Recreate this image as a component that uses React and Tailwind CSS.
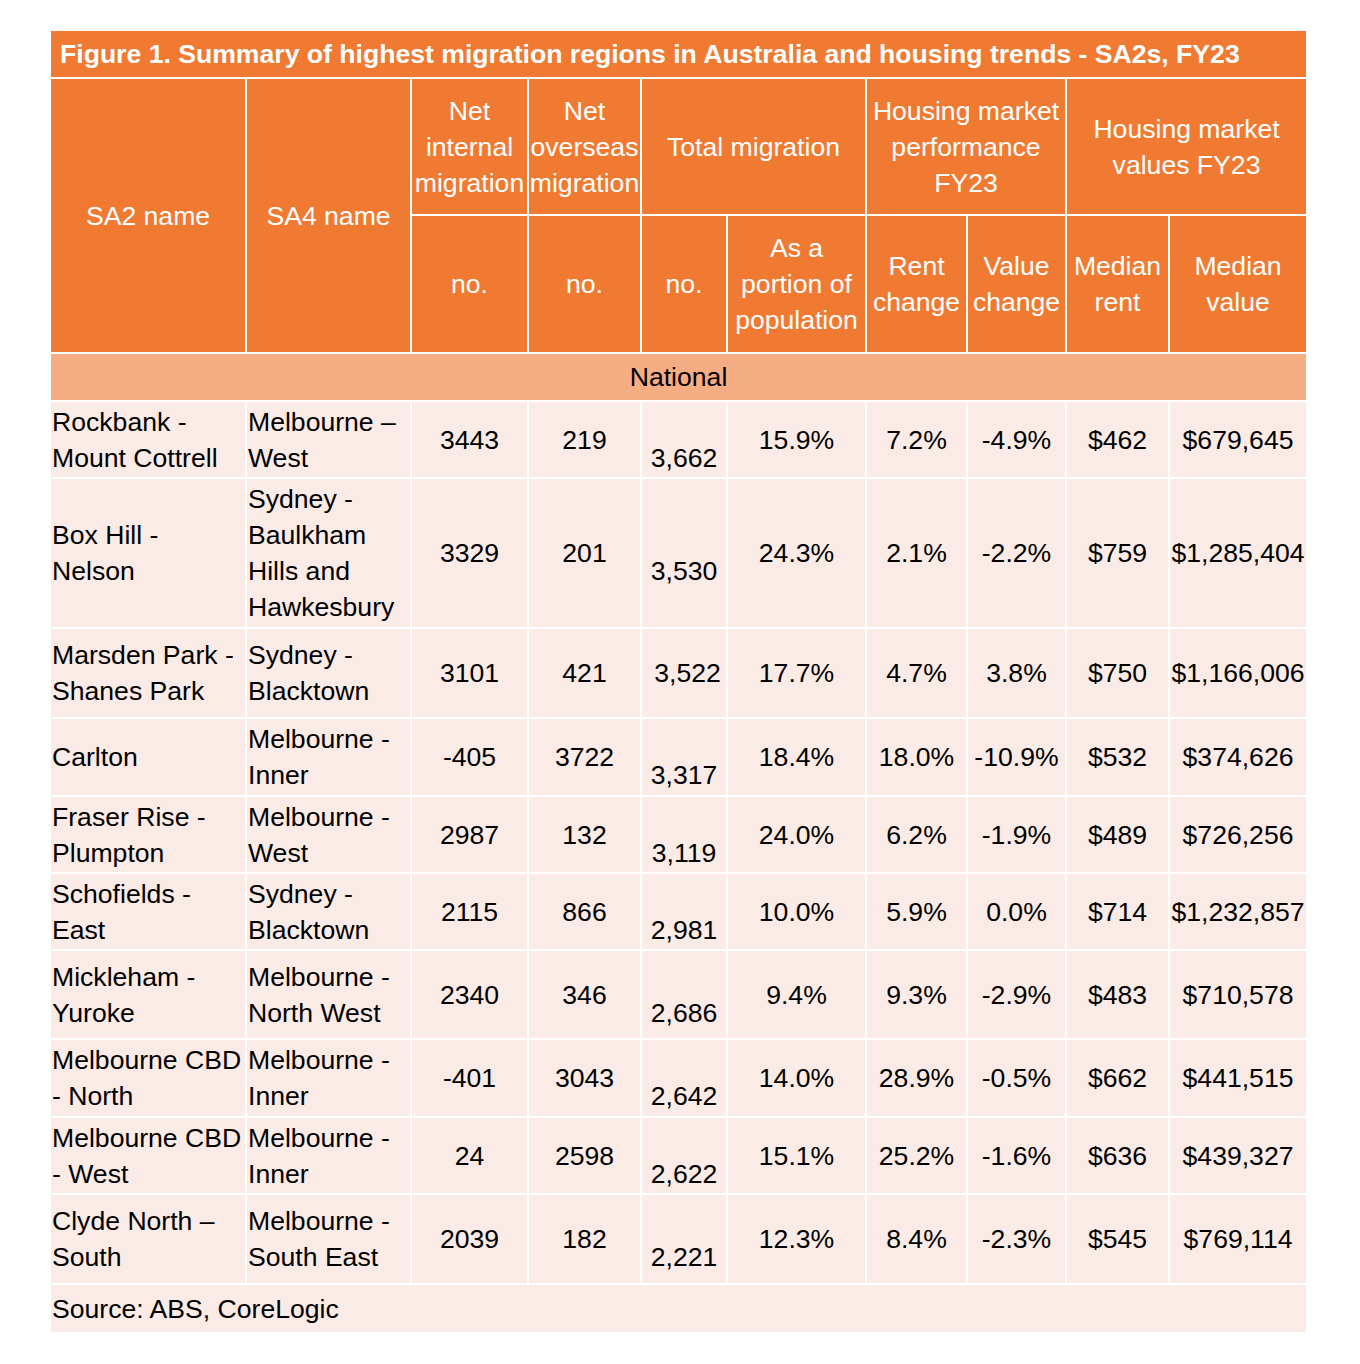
import React from 'react';

const rows = [
  { sa2: ['Rockbank -', 'Mount Cottrell'], sa4: ['Melbourne –', 'West'], internal: '3443', overseas: '219', total: '3,662', portion: '15.9%', rent: '7.2%', value: '-4.9%', medRent: '$462', medValue: '$679,645', h: 'h-[77px]' },
  { sa2: ['Box Hill -', 'Nelson'], sa4: ['Sydney -', 'Baulkham', 'Hills and', 'Hawkesbury'], internal: '3329', overseas: '201', total: '3,530', portion: '24.3%', rent: '2.1%', value: '-2.2%', medRent: '$759', medValue: '$1,285,404', h: 'h-[150px]' },
  { sa2: ['Marsden Park -', 'Shanes Park'], sa4: ['Sydney -', 'Blacktown'], internal: '3101', overseas: '421', total: '3,522', portion: '17.7%', rent: '4.7%', value: '3.8%', medRent: '$750', medValue: '$1,166,006', h: 'h-[90px]', single: true },
  { sa2: ['Carlton'], sa4: ['Melbourne -', 'Inner'], internal: '-405', overseas: '3722', total: '3,317', portion: '18.4%', rent: '18.0%', value: '-10.9%', medRent: '$532', medValue: '$374,626', h: 'h-[78px]' },
  { sa2: ['Fraser Rise -', 'Plumpton'], sa4: ['Melbourne -', 'West'], internal: '2987', overseas: '132', total: '3,119', portion: '24.0%', rent: '6.2%', value: '-1.9%', medRent: '$489', medValue: '$726,256', h: 'h-[77px]' },
  { sa2: ['Schofields -', 'East'], sa4: ['Sydney -', 'Blacktown'], internal: '2115', overseas: '866', total: '2,981', portion: '10.0%', rent: '5.9%', value: '0.0%', medRent: '$714', medValue: '$1,232,857', h: 'h-[77px]' },
  { sa2: ['Mickleham -', 'Yuroke'], sa4: ['Melbourne -', 'North West'], internal: '2340', overseas: '346', total: '2,686', portion: '9.4%', rent: '9.3%', value: '-2.9%', medRent: '$483', medValue: '$710,578', h: 'h-[89px]' },
  { sa2: ['Melbourne CBD', '- North'], sa4: ['Melbourne -', 'Inner'], internal: '-401', overseas: '3043', total: '2,642', portion: '14.0%', rent: '28.9%', value: '-0.5%', medRent: '$662', medValue: '$441,515', h: 'h-[78px]' },
  { sa2: ['Melbourne CBD', '- West'], sa4: ['Melbourne -', 'Inner'], internal: '24', overseas: '2598', total: '2,622', portion: '15.1%', rent: '25.2%', value: '-1.6%', medRent: '$636', medValue: '$439,327', h: 'h-[77px]' },
  { sa2: ['Clyde North –', 'South'], sa4: ['Melbourne -', 'South East'], internal: '2039', overseas: '182', total: '2,221', portion: '12.3%', rent: '8.4%', value: '-2.3%', medRent: '$545', medValue: '$769,114', h: 'h-[90px]' },
];

function Lines({ lines }) {
  return lines.map((l, i) => (
    <React.Fragment key={i}>
      {i > 0 && <br />}
      {l}
    </React.Fragment>
  ));
}

export default function App() {
  const th = 'border-2 border-white px-0 font-normal text-center align-middle';
  const td = 'border-2 border-white px-0 text-center align-middle whitespace-nowrap';

  return (
    <div className="bg-white w-[1360px] h-[1364px] pt-[29px] pl-[49px] font-['Liberation_Sans',Arial,sans-serif] text-[26.6px] leading-[36px] text-black">
      <table className="table-fixed border-collapse w-[1257px]">
        <colgroup>
          <col className="w-[196px]" />
          <col className="w-[165px]" />
          <col className="w-[117px]" />
          <col className="w-[113px]" />
          <col className="w-[86px]" />
          <col className="w-[139px]" />
          <col className="w-[101px]" />
          <col className="w-[99px]" />
          <col className="w-[103px]" />
          <col className="w-[138px]" />
        </colgroup>
        <thead className="bg-[#f07a32] text-white">
          <tr className="h-[48px]">
            <th colSpan={10} className="border-2 border-white pl-[9px] text-left font-bold text-[26.6px] leading-[30px] align-middle whitespace-nowrap">
              Figure 1. Summary of highest migration regions in Australia and housing trends - SA2s, FY23
            </th>
          </tr>
          <tr className="h-[137px]">
            <th rowSpan={2} className={th}>SA2 name</th>
            <th rowSpan={2} className={th}>SA4 name</th>
            <th className={th}>Net<br />internal<br />migration</th>
            <th className={th}>Net<br />overseas<br />migration</th>
            <th colSpan={2} className={th}>Total migration</th>
            <th colSpan={2} className={th}>Housing market<br />performance<br />FY23</th>
            <th colSpan={2} className={th}>Housing market<br />values FY23</th>
          </tr>
          <tr className="h-[138px]">
            <th className={th}>no.</th>
            <th className={th}>no.</th>
            <th className={th}>no.</th>
            <th className={th}>As a<br />portion of<br />population</th>
            <th className={th}>Rent<br />change</th>
            <th className={th}>Value<br />change</th>
            <th className={th}>Median<br />rent</th>
            <th className={th}>Median<br />value</th>
          </tr>
        </thead>
        <tbody className="bg-[#faebe6]">
          <tr className="h-[48px] bg-[#f7ad84]">
            <td colSpan={10} className="border-2 border-white text-center align-middle">National</td>
          </tr>
          {rows.map((r) => (
            <tr key={r.sa2.join(' ')} className={r.h}>
              <td className={td + ' text-left pl-[1px]'}><Lines lines={r.sa2} /></td>
              <td className={td + ' text-left pl-[1px]'}><Lines lines={r.sa4} /></td>
              <td className={td}>{r.internal}</td>
              <td className={td}>{r.overseas}</td>
              <td className={td + (r.single ? ' pl-[7px]' : '')}>
                {r.single ? r.total : <><br />{r.total}</>}
              </td>
              <td className={td}>{r.portion}</td>
              <td className={td}>{r.rent}</td>
              <td className={td}>{r.value}</td>
              <td className={td}>{r.medRent}</td>
              <td className={td}>{r.medValue}</td>
            </tr>
          ))}
          <tr className="h-[48px]">
            <td colSpan={10} className="border-2 border-white border-b-0 pl-[1px] text-left align-middle">Source: ABS, CoreLogic</td>
          </tr>
        </tbody>
      </table>
    </div>
  );
}
